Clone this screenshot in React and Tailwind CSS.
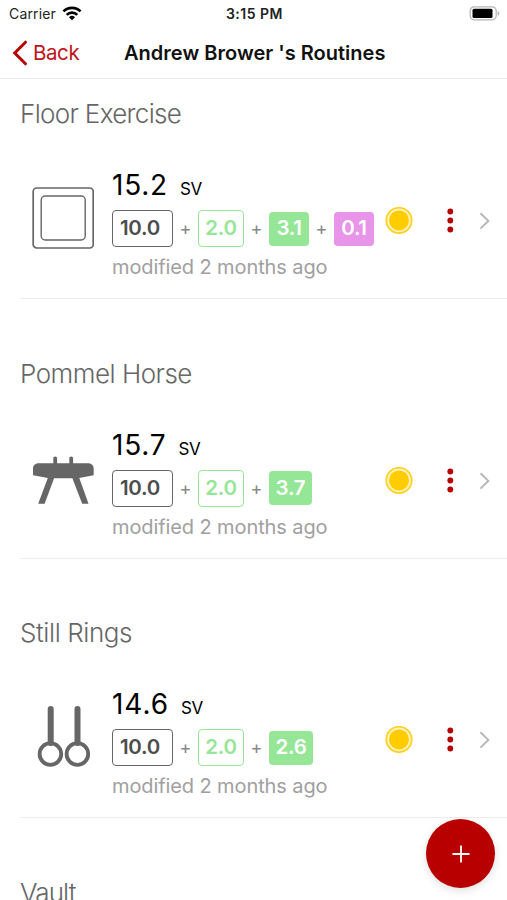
import { Fragment } from 'react';
import clsx from 'clsx';

function FloorIcon() {
  return (
    <svg width="62" height="62" viewBox="0 0 62 62" fill="none" stroke="#666">
      <rect x="1.2" y="1" width="60" height="60" rx="3.5" strokeWidth="1.7" />
      <rect x="9.2" y="9" width="44" height="44" rx="4" strokeWidth="1.4" />
    </svg>
  );
}

function PommelIcon() {
  return (
    <svg width="62" height="62" viewBox="0 0 62 62" fill="#666">
      <path d="M21.3 11q0-1.500 1.900-1.500T25.100 11v5.200h12.200V11q0-1.500 1.900-1.500T41.100 11v5.200H56c3.500 0 5.700 2.300 5.700 5.500v5.500c0 .9-.5 1.300-1.400 1.400L47.300 31l9.200 25.700h-6.300L40.400 31.300H22.100L12.600 56.700H6.200L15.800 31 2.400 28.600C1.500 28.500 1 28.100 1 27.200v-5.500c0-3.200 2.200-5.500 5.700-5.500h14.600z" />
    </svg>
  );
}

function RingsIcon() {
  return (
    <svg width="62" height="62" viewBox="0 0 62 62" fill="none" stroke="#666">
      <path d="M18.700 3V37M45.500 3V37" strokeWidth="6" strokeLinecap="round" />
      <circle cx="18.400" cy="48" r="10.800" strokeWidth="3.800" />
      <circle cx="45.400" cy="48" r="10.800" strokeWidth="3.800" />
    </svg>
  );
}

const ROUTINES = [
  { name: 'Floor Exercise', track: 'tracking-[-0.67px]', Icon: FloorIcon, value: '15.2', valueTrack: 'tracking-[0.8px]', difficulty: '3.1', width: 'w-10', bonus: '0.1' },
  { name: 'Pommel Horse', track: 'tracking-[-0.5px]', Icon: PommelIcon, value: '15.7', valueTrack: 'tracking-[0.8px]', difficulty: '3.7', width: 'w-[43px]' },
  { name: 'Still Rings', track: 'tracking-[-0.42px]', Icon: RingsIcon, value: '14.6', valueTrack: 'tracking-[0.95px]', difficulty: '2.6', width: 'w-11' },
];

const badgeStyles = {
  base: 'w-[61px] h-[37px] border-[1.5px] border-[#666] text-[#4d4d4d] pr-[5px]',
  execution: 'w-[46px] h-[37px] border-[1.5px] border-[#96e697] text-[#96e697]',
  difficulty: 'h-[34px] bg-[#96e697] text-white',
  bonus: 'w-10 h-[34px] bg-[#e794e9] text-white',
};

function Badge({ kind, className, children }) {
  return (
    <span
      className={clsx(
        'flex items-center justify-center rounded-[4px] text-[20.5px] font-semibold tracking-[-0.25px]',
        badgeStyles[kind],
        className
      )}
    >
      {children}
    </span>
  );
}

function SectionTitle({ children, className }) {
  return (
    <h2 className={clsx('h-[70px] pl-5 text-[26px] leading-[70px] font-light text-[#666]', className)}>
      {children}
    </h2>
  );
}

function RoutineRow({ routine }) {
  const { Icon, value, valueTrack, difficulty, width, bonus } = routine;
  const badges = [
    { kind: 'base', text: '10.0' },
    { kind: 'execution', text: '2.0' },
    { kind: 'difficulty', text: difficulty, className: width },
  ];
  if (bonus) badges.push({ kind: 'bonus', text: bonus });

  return (
    <div className="ml-5 flex h-[150px] border-b border-[#ececec]">
      <div className="w-[92px] shrink-0 pt-[38px] pl-3">
        <Icon />
      </div>
      <div className="w-[266px] shrink-0 pt-4">
        <div className="flex h-10 items-baseline text-black">
          <span className={clsx('text-[28px] leading-10', valueTrack)}>{value}</span>
          <span className="ml-3 text-[17px] tracking-[-0.4px]">SV</span>
        </div>
        <div className="mt-[5px] flex h-[37px] items-center">
          {badges.map((b, i) => (
            <Fragment key={b.kind}>
              {i > 0 && <span className="w-[25px] text-center text-[18px] text-[#888]">+</span>}
              <Badge kind={b.kind} className={b.className}>
                {b.text}
              </Badge>
            </Fragment>
          ))}
        </div>
        <p className="mt-[6px] text-[20px] leading-7 tracking-[-0.1px] text-[#a0a0a0]">modified 2 months ago</p>
      </div>
      <div className="flex flex-1 pt-[58px]">
        <svg className="ml-[7px]" width="28" height="28" viewBox="0 0 28 28">
          <circle cx="14" cy="13.400" r="12.700" fill="#fff3b8" stroke="#ffcf24" strokeWidth="1.700" />
          <circle cx="14" cy="13.400" r="10" fill="#ffcc00" />
        </svg>
        <svg className="ml-[33px]" width="8" height="28" viewBox="0 0 8 28" fill="#b80000">
          <circle cx="4.300" cy="4.500" r="2.900" />
          <circle cx="4.300" cy="13.500" r="2.900" />
          <circle cx="4.300" cy="22.500" r="2.900" />
        </svg>
        <svg className="ml-[25px]" width="12" height="28" viewBox="0 0 12 28" fill="none" stroke="#b8b8b8" strokeWidth="2">
          <path d="M1.500 6.200 9.300 13.900 1.500 21.600" />
        </svg>
      </div>
    </div>
  );
}

function StatusBar() {
  return (
    <div className="flex h-[27px] items-center justify-between pr-[7px] pl-[9px] text-[14px] text-[#222]">
      <div className="flex w-[150px] items-center">
        <span className="tracking-[0.15px]">Carrier</span>
        <svg className="ml-[6px]" width="20" height="15" viewBox="0 0 20 15" fill="none" stroke="#000" strokeWidth="2.600">
          <path d="M1.400 5.400a12.300 12.300 0 0 1 17.200 0M4.700 8.800a7.500 7.500 0 0 1 10.600 0" />
          <path d="M10 14.200 7 11.300a4.300 4.300 0 0 1 6 0z" fill="#000" stroke="none" />
        </svg>
      </div>
      <span className="font-semibold tracking-[0.5px]">3:15 PM</span>
      <div className="flex w-[150px] justify-end">
        <svg width="31" height="15" viewBox="0 0 31 15">
          <rect x="1.200" y=".8" width="26" height="13" rx="4" fill="#fff" stroke="#b5b5b5" strokeWidth="1.300" />
          <rect x="3.500" y="2.800" width="20" height="9.200" rx="1.500" fill="#000" />
          <path d="M28.700 5c2.300.8 2.300 4 0 4.800z" fill="#b5b5b5" />
        </svg>
      </div>
    </div>
  );
}

function NavBar() {
  return (
    <header className="flex h-[52px] items-center border-b border-[#ebebeb]">
      <button className="flex w-[124px] items-center pl-3 text-[20.500px] tracking-[-0.4px] text-[#c1141b]">
        <svg width="16" height="26" viewBox="0 0 16 26" fill="none" stroke="#b80000" strokeWidth="3" strokeLinecap="round">
          <path d="M13.500 2.200 2.700 13l10.800 10.800" />
        </svg>
        <span className="ml-[5px] pt-px">Back</span>
      </button>
      <h1 className="text-[20px] font-semibold tracking-[0.020px] whitespace-nowrap text-[#111]">Andrew Brower 's Routines</h1>
    </header>
  );
}

export default function App() {
  return (
    <div className="relative h-[900px] w-[507px] overflow-hidden bg-white font-[Inter,'Liberation_Sans',sans-serif]">
      <StatusBar />
      <NavBar />
      <main>
        {ROUTINES.map((routine) => (
          <section key={routine.name} className="h-[259.500px]">
            <SectionTitle className={routine.track}>{routine.name}</SectionTitle>
            <RoutineRow routine={routine} />
          </section>
        ))}
        <SectionTitle className="tracking-[-0.9px]">Vault</SectionTitle>
      </main>
      <button className="absolute top-[819px] left-[426px] flex size-[69px] items-center justify-center rounded-full bg-[#b80000] shadow-[0_3px_9px_rgba(0,0,0,0.12)]">
        <svg width="18" height="18" viewBox="0 0 18 18" stroke="#fff" strokeWidth="1.800">
          <path d="M9 .5v17M.5 9h17" />
        </svg>
      </button>
    </div>
  );
}
